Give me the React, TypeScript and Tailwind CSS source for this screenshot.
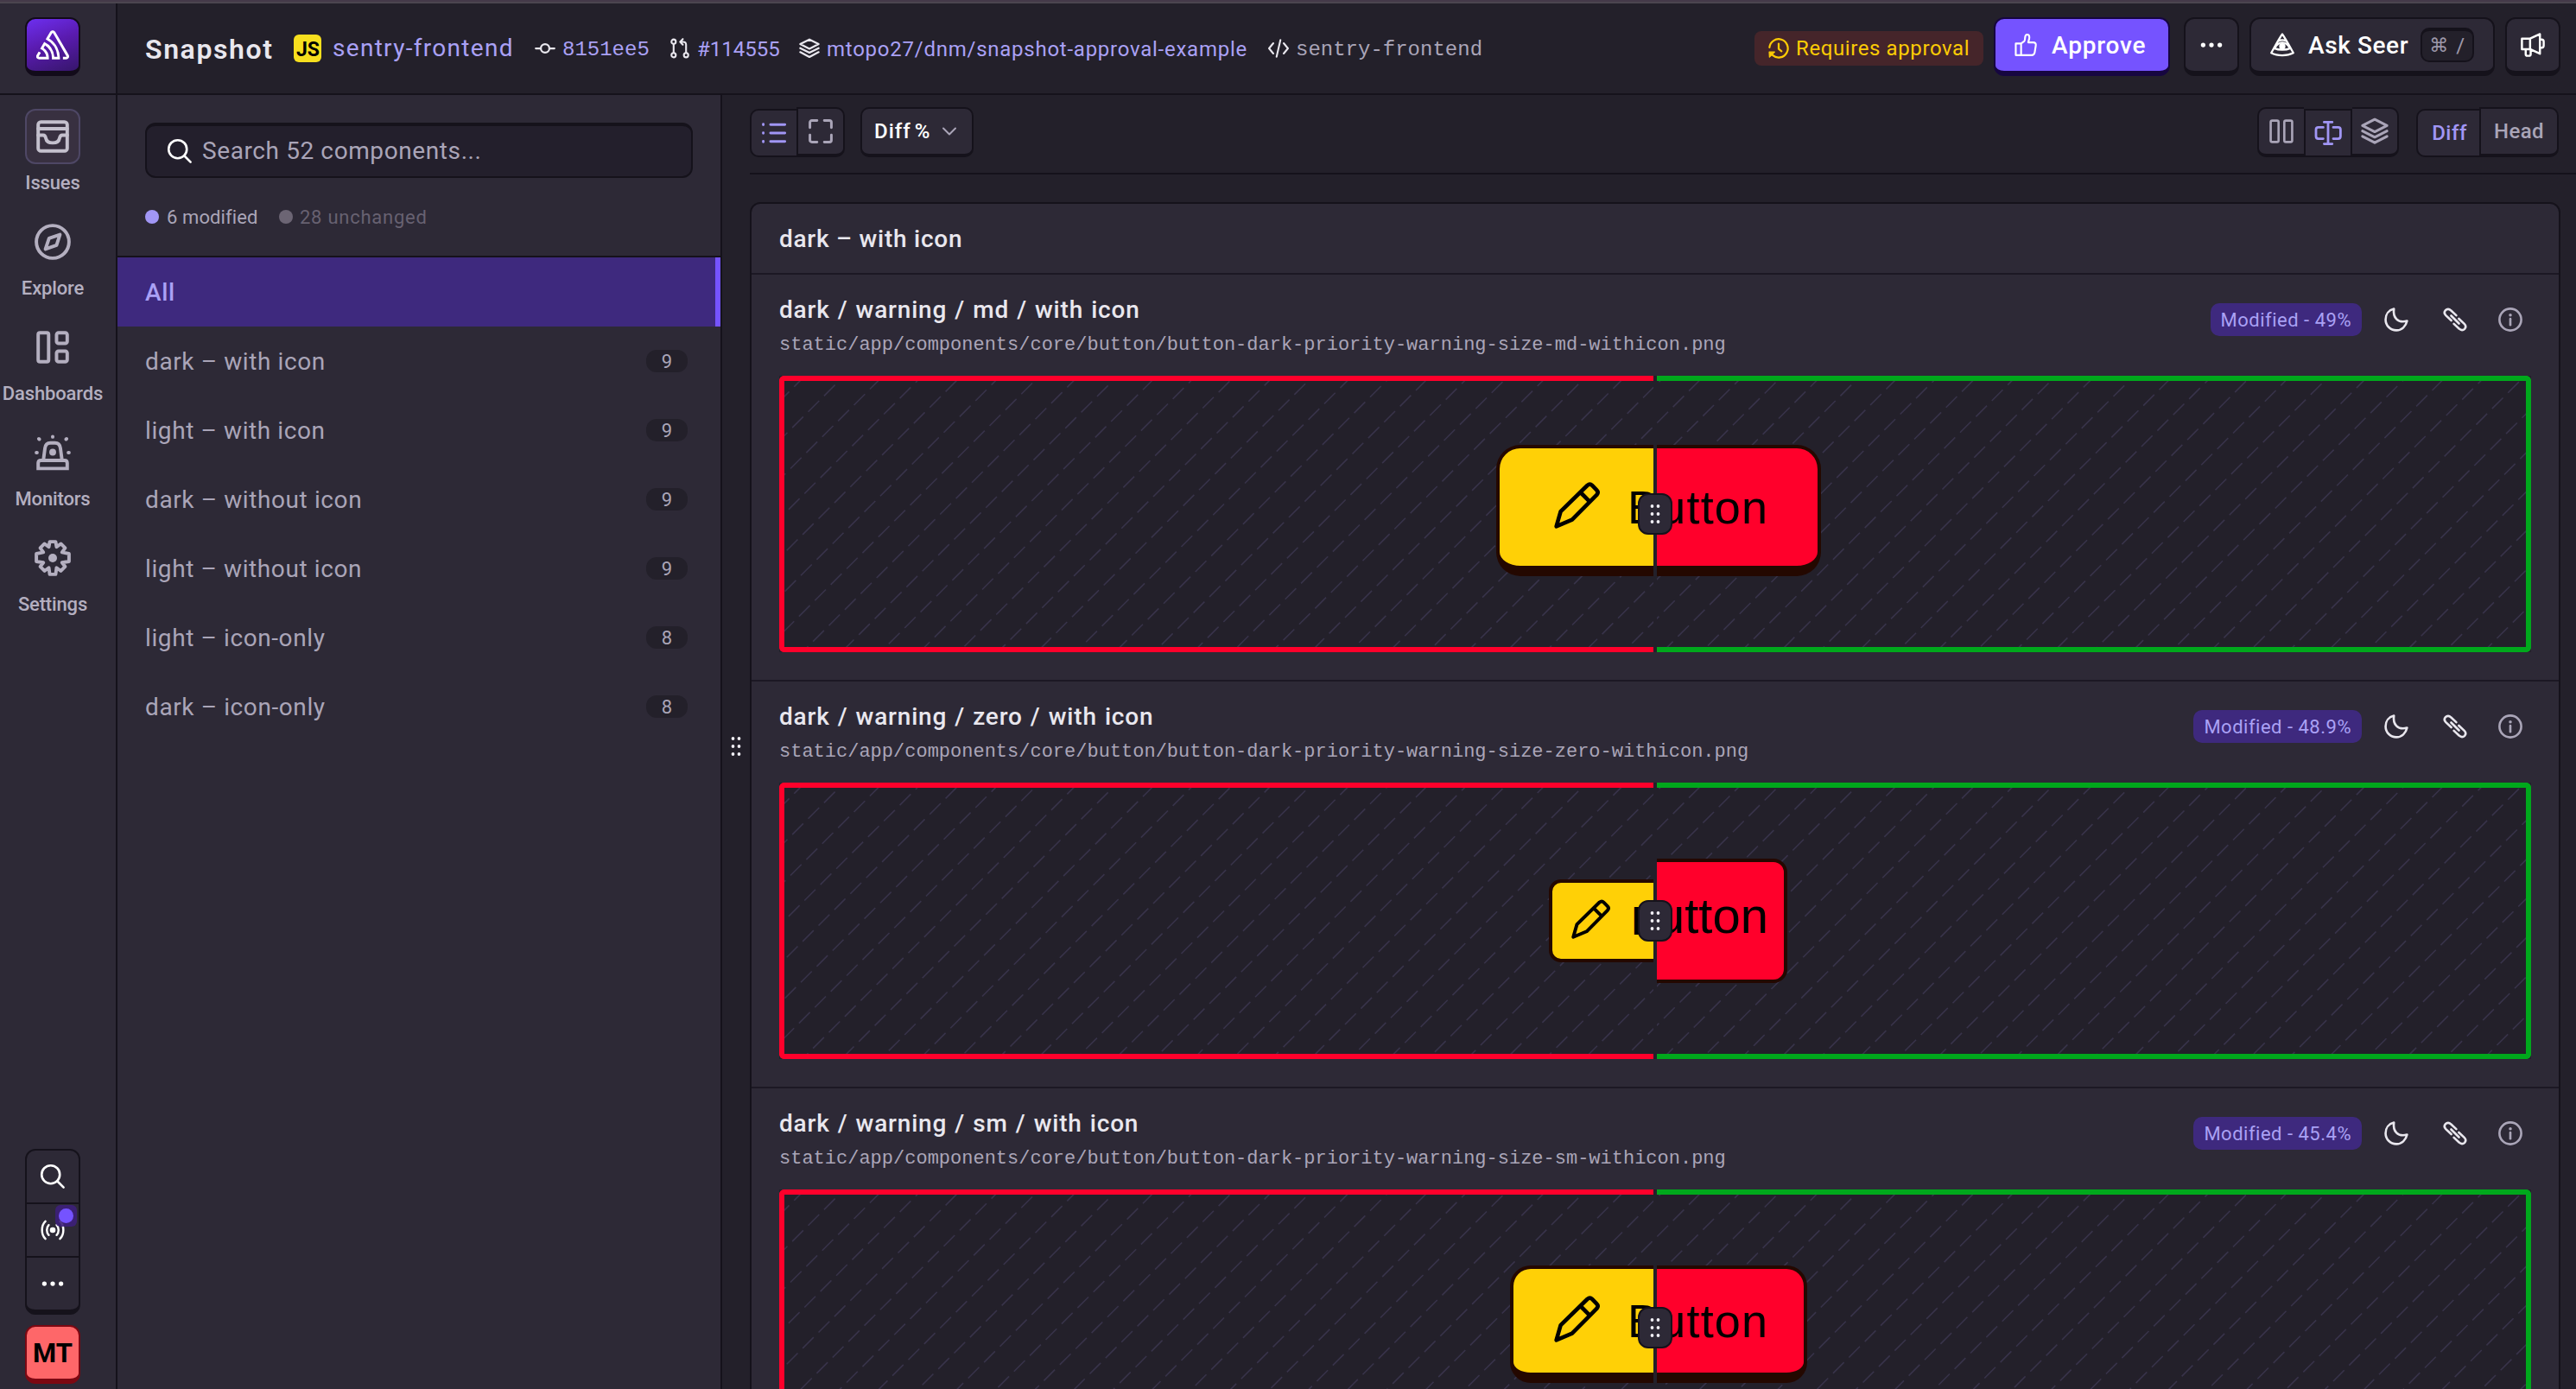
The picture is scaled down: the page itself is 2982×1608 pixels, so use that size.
import type { ReactNode } from 'react';
import { SiSentry } from 'react-icons/si';

type IconProps = { className?: string; width?: number; children?: ReactNode };

function Icon({ className, width = 1.5, children }: IconProps) {
  return (
    <svg
      className={className}
      viewBox="0 0 16 16"
      fill="none"
      stroke="currentColor"
      strokeWidth={width}
      strokeLinecap="round"
      strokeLinejoin="round"
      overflow="visible"
    >
      {children}
    </svg>
  );
}

const IssuesIcon = () => (
  <Icon className="size-[42px]">
    <rect x="1.6" y="1.6" width="12.8" height="12.8" rx="1.2" />
    <path d="M1.6 4.6h12.8M1.6 7.4h2.2c.8 0 1 .5 1.2 1.4.2 1.2.9 2 3 2s2.8-.8 3-2c.2-.9.4-1.4 1.2-1.4h2.2" />
  </Icon>
);

const ExploreIcon = () => (
  <Icon className="size-[42px]">
    <circle cx="8" cy="8" r="7.2" />
    <path d="M11.2 4.8 9.7 9.5 4.8 11.2 6.4 6.4z" />
  </Icon>
);

const DashboardsIcon = () => (
  <Icon className="size-[42px]">
    <rect x="1.6" y="1.6" width="4.6" height="12.8" rx=".8" />
    <rect x="9.7" y="1.6" width="4.7" height="4.7" rx=".9" />
    <rect x="9.7" y="9.7" width="4.7" height="4.7" rx=".9" />
  </Icon>
);

const MonitorsIcon = () => (
  <Icon className="size-[42px]">
    <path d="M1.6 15v-2.4c0-.8.5-1.2 1.2-1.2h10.4c.7 0 1.2.4 1.2 1.2V15z" strokeLinejoin="miter" />
    <path d="m3.9 11.2.7-5.2c.2-1.6 1.1-2.3 2.4-2.3h2c1.3 0 2.2.7 2.4 2.3l.7 5.2M8 .9v.2M1.9 1.9l.2.2M14.1 1.9l-.2.2M.8 8h.3M15.2 8h-.3" />
    <circle cx="8" cy="7.8" r="1.5" fill="currentColor" stroke="none" />
  </Icon>
);

const SettingsIcon = () => (
  <Icon className="size-[42px]">
    <path d="M6.7.8h2.6l.4 2.3 1.9-1.4 1.9 1.9-1.4 1.9 3.1.6v3.4l-3.1.5 1.4 1.8-1.9 1.9-1.9-1.4-.4 2.9H6.7l-.4-2.9-1.9 1.4-1.9-1.9 1.4-1.8-3.1-.5V6.1l3.1-.6-1.4-1.9 1.9-1.9 1.9 1.4z" />
    <circle cx="8" cy="8" r="1.9" fill="currentColor" stroke="none" />
  </Icon>
);

const SearchIcon = () => (
  <Icon className="size-7">
    <circle cx="6.7" cy="6.7" r="6" />
    <path d="m11 11 4.2 4.2" />
  </Icon>
);

const BroadcastIcon = () => (
  <Icon className="size-7" width={1.4}>
    <circle cx="8" cy="8" r="1.9" fill="currentColor" stroke="none" />
    <path d="M5.4 4.7c-1.7 1.7-1.7 4.9 0 6.6M10.6 4.7c1.7 1.7 1.7 4.9 0 6.6M3.2 2.2C.2 5 .2 11 3.2 13.8M12.8 2.2c3 2.8 3 8.8 0 11.6" />
  </Icon>
);

const EllipsisIcon = () => (
  <Icon className="size-7">
    <g fill="currentColor" stroke="none">
      <circle cx="2.5" cy="8" r="1.5" />
      <circle cx="8" cy="8" r="1.5" />
      <circle cx="13.5" cy="8" r="1.5" />
    </g>
  </Icon>
);

const CommitIcon = () => (
  <Icon className="size-6">
    <circle cx="8" cy="8" r="3.3" />
    <path d="M.8 8h3.7M11.5 8h3.7" />
  </Icon>
);

const PullRequestIcon = () => (
  <Icon className="size-6" width={1.4}>
    <circle cx="3.2" cy="2.8" r="1.7" />
    <circle cx="3.2" cy="13.2" r="1.7" />
    <circle cx="12.8" cy="13.2" r="1.7" />
    <path d="M3.2 4.7v6.6M12.8 11.3V5.2c0-1.4-.8-2.2-2.2-2.2H8.4M10.3.8 8.2 3l2.1 2.1" />
  </Icon>
);

const LayersIcon = ({ className = 'size-6' }: { className?: string }) => (
  <Icon className={className}>
    <path d="M8 1.1 15.1 4.7 8 8.3.9 4.7zM.9 7.8 8 11.4l7.1-3.6M.9 10.9 8 14.6l7.1-3.7" />
  </Icon>
);

const CodeIcon = () => (
  <Icon className="size-6" width={1.4}>
    <path d="M4 4 .7 8 4 12M12 4l3.3 4L12 12M9.5 1.5l-3 13" />
  </Icon>
);

const PendingIcon = () => (
  <Icon className="size-6">
    <path d="M.9 7.3a7.1 7.1 0 1 1 2.4 6M8 4.4v4l2.2 1.8" />
    <path d="M.7 10.8h4.2L.9 14.8z" fill="currentColor" strokeWidth={0.8} />
  </Icon>
);

const ThumbIcon = () => (
  <Icon className="size-[26px]" width={1.3}>
    <path d="M.9 7h3.8v8.3H.9zM4.7 7 7 5.3c.4-.4.4-1 .5-2.3C7.6 1.4 8 .6 9 .6c1.2 0 1.6 1 1.6 2 0 1.5-.8 3-.8 3.6h3.6c1.3 0 2 .9 1.8 2.1l-.8 5c-.2 1.3-.9 2-2.2 2H4.7" />
  </Icon>
);

const SeerIcon = () => (
  <Icon className="size-7" width={1.3}>
    <path d="M8 .9C6.9 2 2.2 10.6.7 13.3c4 2.1 10.6 2.1 14.6 0C13.8 10.6 9.1 2 8 .9zM5.4 5.5c1.6-.9 3.6-.9 5.200 0M3 10.2C4.2 7.8 6 6.5 8 6.5s3.8 1.300 5 3.700M2.700 10.200c3 1.400 7.600 1.400 10.600 0" />
    <circle cx="8" cy="9" r="2.1" fill="currentColor" stroke="none" />
  </Icon>
);

const MegaphoneIcon = () => (
  <Icon className="size-7" width={1.4}>
    <path d="M.8 3.8h5.4l6.5-3v13l-6.5-3H.8zM6.2 3.8v7M3.3 10.8v3.3c0 .7.4 1.1 1.1 1.1h1.1c.7 0 1.1-.4 1.1-1.1v-3.2M12.7 4.4h1.1c.9 0 1.4.6 1.4 1.4v2.6c0 .9-.5 1.4-1.4 1.4h-1.1" />
  </Icon>
);

const ListIcon = () => (
  <Icon className="size-7" width={1.7}>
    <path d="M5.7 2.4h9.5M5.7 8h9.5M5.7 13.6h9.5M.9 2.2v.4M.9 7.8v.4M.9 13.4v.4" />
  </Icon>
);

const ExpandIcon = () => (
  <Icon className="size-7" width={1.7}>
    <path d="M.9 5.6V2.2C.9 1.4 1.4.9 2.2.9h3.4M10.4.9h3.4c.8 0 1.3.5 1.3 1.3v3.4M15.1 10.4v3.4c0 .8-.5 1.3-1.3 1.3h-3.4M5.6 15.1H2.2c-.8 0-1.3-.5-1.3-1.3v-3.4" />
  </Icon>
);

const ChevronIcon = () => (
  <Icon className="size-4 text-[#aaa5b8]" width={2}>
    <path d="m1 4.5 7 7 7-7" />
  </Icon>
);

const ColumnsIcon = () => (
  <Icon className="size-7">
    <rect x=".9" y=".9" width="5.2" height="14.2" rx="1" />
    <rect x="9.9" y=".9" width="5.2" height="14.2" rx="1" />
  </Icon>
);

const SliderIcon = () => (
  <Icon className="size-8" width={1.4}>
    <path d="M5.7 1.7h4.7M5.7 14.3h4.7M8 1.7v12.6M5.2 4.7H2.4c-.9 0-1.4.5-1.4 1.4v3.8c0 .9.5 1.4 1.4 1.4h2.8M11 4.7h2.8c.9 0 1.4.5 1.4 1.4v3.8c0 .9-.5 1.4-1.4 1.4H11" />
  </Icon>
);

const MoonIcon = () => (
  <Icon className="size-7">
    <path d="M6.4.9c-.8 5.5 2.4 9.7 8.7 8-.8 3.6-3.5 6.2-7.1 6.2A7.1 7.1 0 0 1 .9 8C.9 4.5 3 1.7 6.4.9z" />
  </Icon>
);

const LinkIcon = () => (
  <Icon className="size-7">
    <path d="M5.5 8.6 1.9 5.2C.8 4.1.8 2.8 1.7 1.8c1-1 2.4-1 3.5.1l3.6 3.3M5.4 5.4l5.2 5.2M10.5 7.4l3.6 3.4c1.1 1.1 1.1 2.4.2 3.4-1 1-2.4 1-3.5-.1l-3.6-3.3" />
  </Icon>
);

const InfoIcon = () => (
  <Icon className="size-7 text-[#aaa5b8]">
    <circle cx="8" cy="8" r="7.2" />
    <path d="M8 7.5v4" />
    <circle cx="8" cy="5" r="1" fill="currentColor" stroke="none" />
  </Icon>
);

const PencilIcon = ({ className }: { className: string }) => (
  <Icon className={className} width={1.4}>
    <path d="M.8 15.2 2.3 10 11.6.9c.6-.5 1.2-.5 1.7 0l1.6 1.6c.5.5.5 1.1 0 1.7L6.3 12.9zM9.3 3.4l3.2 3.2" />
  </Icon>
);

// six dot drag grip
const Grip = () => (
  <svg className="h-6 w-3" viewBox="0 0 12 24" fill="#f0eef5">
    {[3, 12, 21].map(y => (
      <g key={y}>
        <circle cx="2.5" cy={y} r="1.9" />
        <circle cx="9.5" cy={y} r="1.9" />
      </g>
    ))}
  </svg>
);

const nav = [
  { label: 'Issues', icon: <IssuesIcon />, active: true },
  { label: 'Explore', icon: <ExploreIcon /> },
  { label: 'Dashboards', icon: <DashboardsIcon /> },
  { label: 'Monitors', icon: <MonitorsIcon /> },
  { label: 'Settings', icon: <SettingsIcon /> },
];

const groups = [
  { name: 'dark – with icon', count: 9 },
  { name: 'light – with icon', count: 9 },
  { name: 'dark – without icon', count: 9 },
  { name: 'light – without icon', count: 9 },
  { name: 'light – icon-only', count: 8 },
  { name: 'dark – icon-only', count: 8 },
];

function Sidebar() {
  return (
    <nav className="flex w-[136px] shrink-0 flex-col border-r-2 border-[#15121b] bg-[#2d2936]">
      <div className="h-[106px] shrink-0 border-b-2 border-[#15121b] pt-4 pl-[29px]">
        <div className="flex h-[68px] w-16 items-center justify-center rounded-xl border-2 border-b-[6px] border-[#120b1a] bg-[linear-gradient(160deg,#6d2ff0_0%,#5a1bb0_45%,#36166b_100%)] text-white">
          <SiSentry size={38} />
        </div>
      </div>
      <div className="flex flex-col gap-[26px] pt-4">
        {nav.map(item => (
          <div key={item.label} className="flex h-24 w-[122px] flex-col items-center text-[#b4afc0]">
            <div
              className={
                item.active
                  ? 'flex size-16 shrink-0 items-center justify-center rounded-xl border-2 border-[#4e4765] bg-[#383040] text-[#c4c0cd]'
                  : 'flex size-16 shrink-0 items-center justify-center'
              }
            >
              {item.icon}
            </div>
            <span className="mt-[9px] text-[22px] leading-[26px] font-medium tracking-[-0.15px]">{item.label}</span>
          </div>
        ))}
      </div>
      <div className="mt-auto mb-1.5 ml-[29px] w-16 text-white">
        <div className="h-48 rounded-xl border-2 border-b-[6px] border-[#15121b]">
          <div className="flex h-[62px] items-center justify-center border-b-2 border-[#15121b]">
            <SearchIcon />
          </div>
          <div className="relative flex h-[62px] items-center justify-center border-b-2 border-[#15121b]">
            <BroadcastIcon />
            <div className="absolute top-px right-0.5 flex size-[25px] items-center justify-center rounded-md bg-[#3d1f7a]/90">
              <div className="size-[17px] rounded-full bg-[#7553ff]" />
            </div>
          </div>
          <div className="flex h-[60px] items-center justify-center">
            <EllipsisIcon />
          </div>
        </div>
        <div className="mt-3 flex h-[68px] items-center justify-center rounded-xl border-2 border-b-[6px] border-[#7c0812] bg-[#fe6769] pt-0.5 text-[31px] font-bold text-black">
          MT
        </div>
      </div>
    </nav>
  );
}

function Header() {
  return (
    <header className="flex h-[106px] shrink-0 items-start border-b-2 border-[#15121b] pr-[18px] pl-8 text-[#aaa1f5]">
      <div className="flex h-[104px] items-center text-2xl">
        <h1 className="w-[172px] pt-0.5 text-[32px] font-semibold tracking-[1.6px] text-[#e9e7ee]">Snapshot</h1>
        <div className="mr-[13px] flex size-8 items-end justify-end rounded-md bg-[#f7df1e] pr-0.5 text-[23px] leading-[29px] font-bold text-black">
          JS
        </div>
        <span className="w-[234px] text-[28px] tracking-[1.3px]">sentry-frontend</span>
        <span className="mr-2 text-[#e9e7ee]"><CommitIcon /></span>
        <span className="w-[124px] pt-[3px] font-['Liberation_Mono',monospace]">8151ee5</span>
        <span className="mr-2 text-[#e9e7ee]"><PullRequestIcon /></span>
        <span className="w-[118px] pt-0.5">#114555</span>
        <span className="mr-2 text-[#e9e7ee]"><LayersIcon /></span>
        <span className="w-[511px] pt-0.5 tracking-[0.75px]">mtopo27/dnm/snapshot-approval-example</span>
        <span className="mr-2 text-[#e9e7ee]"><CodeIcon /></span>
        <span className="pt-[3px] font-['Liberation_Mono',monospace] text-[#aaa5b8]">sentry-frontend</span>
      </div>
      <div className="mt-4 ml-auto flex text-white">
        <div className="mt-4 mr-3 flex h-10 w-[265px] items-center gap-2 rounded-lg bg-[#45252a] pl-4 text-2xl tracking-[0.6px] text-[#fccb05]">
          <PendingIcon />
          Requires approval
        </div>
        <div className="mr-4 flex h-[68px] w-[204px] items-center gap-[17px] rounded-xl border-2 border-b-[6px] border-[#160640] bg-[#7553ff] pl-[22px] text-[28px] font-medium tracking-[0.8px]">
          <ThumbIcon />
          <span className="pt-px">Approve</span>
        </div>
        <div className="mr-3 flex h-[68px] w-16 items-center justify-center rounded-xl border-2 border-b-[6px] border-[#15121b] bg-[#2d2936]">
          <EllipsisIcon />
        </div>
        <div className="mr-3 flex h-[68px] w-[284px] items-center rounded-xl border-2 border-b-[6px] border-[#15121b] bg-[#2d2936] pl-[22px] text-[28px] font-medium tracking-[0.6px]">
          <SeerIcon />
          <span className="ml-4 w-[130px] pt-px">Ask Seer</span>
          <kbd className="flex h-10 w-[62px] items-center justify-center gap-[9px] rounded-[10px] border-2 border-t-4 border-[#15121b] bg-[#23202a] text-2xl font-normal text-[#9d98aa]">
            <span className="font-['DejaVu_Sans',sans-serif] text-[22px] tracking-normal">⌘</span>
            <span className="font-['Roboto',sans-serif]">/</span>
          </kbd>
        </div>
        <div className="flex h-[68px] w-16 items-center justify-center rounded-xl border-2 border-b-[6px] border-[#15121b] bg-[#2d2936]">
          <MegaphoneIcon />
        </div>
      </div>
    </header>
  );
}

function SnapshotList() {
  return (
    <aside className="flex w-[700px] shrink-0 flex-col border-r-2 border-[#15121b] bg-[#2d2936] text-[#aaa5b8]">
      <div className="h-[188px] border-b-2 border-[#15121b] px-8 pt-8">
        <div className="flex h-16 items-center gap-3 rounded-xl border-2 border-t-4 border-[#15121b] bg-[#231f2c] pl-6 text-[28px] tracking-[0.6px]">
          <span className="text-white"><SearchIcon /></span>
          Search 52 components...
        </div>
        <div className="mt-8 flex h-[26px] items-center text-[22px]">
          <span className="mr-[9px] size-4 rounded-full bg-[#a196f5]" />
          <span className="w-[130px] tracking-[0.1px]">6 modified</span>
          <span className="mr-2 size-4 rounded-full bg-[#6c6574]" />
          <span className="tracking-[0.75px] text-[#676171]">28 unchanged</span>
        </div>
      </div>
      <div className="flex h-20 items-center border-r-[6px] border-[#7553ff] bg-[#3e297e] pt-0.5 pl-8 text-[28px] font-medium tracking-[0.6px] text-[#aaa1f5]">
        All
      </div>
      {groups.map(group => (
        <div key={group.name} className="flex h-20 items-center justify-between pr-[38px] pl-8">
          <span className="pt-0.5 text-[28px] tracking-[0.6px]">{group.name}</span>
          <span className="flex h-[26px] w-12 items-center justify-center rounded-xl bg-[#23202a] text-[22px]">
            {group.count}
          </span>
        </div>
      ))}
    </aside>
  );
}

function Toolbar() {
  return (
    <div className="flex h-[92px] shrink-0 border-b-2 border-[#15121b] pt-3.5 pr-5 text-2xl font-medium text-[#aaa5b8]">
      <div className="mr-[18px] flex h-[58px]">
        <div className="mt-0.5 flex w-[54px] items-center justify-center rounded-l-[10px] border-2 border-r-0 border-[#15121b] bg-[#2d2936] text-[#a196f5]">
          <ListIcon />
        </div>
        <div className="flex w-14 items-center justify-center rounded-r-[10px] border-2 border-b-4 border-[#15121b] bg-[#2d2936]">
          <ExpandIcon />
        </div>
      </div>
      <div className="flex h-[58px] w-[131px] items-center justify-between rounded-[10px] border-2 border-b-4 border-[#15121b] bg-[#2d2936] pr-[18px] pl-3.5 tracking-[1px] [word-spacing:-3px] text-white">
        Diff %
        <ChevronIcon />
      </div>
      <div className="ml-auto flex h-[58px]">
        <div className="flex w-[54px] items-center justify-center rounded-l-[10px] border-2 border-r-0 border-b-4 border-[#15121b] bg-[#2d2936]">
          <ColumnsIcon />
        </div>
        <div className="mt-0.5 flex w-14 items-center justify-center border-2 border-[#15121b] bg-[#2d2936] text-[#a196f5]">
          <SliderIcon />
        </div>
        <div className="flex w-[54px] items-center justify-center rounded-r-[10px] border-2 border-b-4 border-l-0 border-[#15121b] bg-[#2d2936]">
          <LayersIcon className="size-8" />
        </div>
      </div>
      <div className="ml-5 flex h-[58px]">
        <div className="mt-0.5 flex w-[73px] items-center justify-center rounded-l-[10px] border-2 border-r-0 border-[#15121b] bg-[#2d2936] pl-0.5 tracking-[0.5px] text-[#a196f5]">
          Diff
        </div>
        <div className="flex w-[92px] items-center justify-center rounded-r-[10px] border-2 border-b-4 border-[#15121b] bg-[#2d2936] tracking-[0.4px]">
          Head
        </div>
      </div>
    </div>
  );
}

function Hatch() {
  const lines = Array.from({ length: 53 }, (_, i) => 30 + i * 45.25);
  return (
    <svg className="absolute inset-0 size-full" stroke="#38334a" strokeWidth="1.6">
      {lines.map((c, i) => (
        <line key={c} x1={c} y1="0" x2={c - 320} y2="320" strokeDasharray="18 8" strokeDashoffset={(i * 11) % 26} />
      ))}
    </svg>
  );
}

const items = [
  {
    title: 'dark / warning / md / with icon',
    path: 'static/app/components/core/button/button-dark-priority-warning-size-md-withicon.png',
    diff: '49%',
    // left and right halves of the split preview
    before: (
      <div className="absolute top-[74px] left-[824px] h-[152px] w-[376px] rounded-[28px] border-4 border-b-[12px] border-[#240800] bg-[#ffd006] text-[54px] tracking-[1.2px] text-black">
        <PencilIcon className="absolute top-[40px] left-[63px] size-[53px]" />
        <span className="absolute top-[38px] left-[148px] leading-[60px]">Button</span>
      </div>
    ),
    after: (
      <div className="absolute top-[74px] right-[816px] h-[152px] w-[376px] rounded-[28px] border-4 border-b-[12px] border-[#240800] bg-[#ff002b] text-[54px] tracking-[1.2px] text-black">
        <span className="absolute top-[38px] left-[148px] leading-[60px]">Button</span>
      </div>
    ),
  },
  {
    title: 'dark / warning / zero / with icon',
    path: 'static/app/components/core/button/button-dark-priority-warning-size-zero-withicon.png',
    diff: '48.9%',
    before: (
      <div className="absolute top-[106px] left-[885px] h-[96px] w-[250px] rounded-[14px] border-4 border-[#240800] bg-[#ffd006] text-[46px] text-black">
        <PencilIcon className="absolute top-[20px] left-[22px] size-[45px]" />
        <span className="absolute top-[14px] left-[91px] leading-[60px]">Button</span>
      </div>
    ),
    after: (
      <div className="absolute top-[82px] right-[855px] h-[144px] w-[300px] rounded-[16px] border-4 border-[#240800] bg-[#ff002b] text-[58px] text-black">
        <span className="absolute top-[32px] right-[18px] leading-[60px]">Button</span>
      </div>
    ),
  },
  {
    title: 'dark / warning / sm / with icon',
    path: 'static/app/components/core/button/button-dark-priority-warning-size-sm-withicon.png',
    diff: '45.4%',
    before: (
      <div className="absolute top-[82px] left-[840px] h-[136px] w-[344px] rounded-[24px] border-4 border-b-[12px] border-[#240800] bg-[#ffd006] text-[54px] tracking-[1.2px] text-black">
        <PencilIcon className="absolute top-[32px] left-[47px] size-[53px]" />
        <span className="absolute top-[30px] left-[132px] leading-[60px]">Button</span>
      </div>
    ),
    after: (
      <div className="absolute top-[82px] right-[832px] h-[136px] w-[344px] rounded-[24px] border-4 border-b-[12px] border-[#240800] bg-[#ff002b] text-[54px] tracking-[1.2px] text-black">
        <span className="absolute top-[30px] left-[132px] leading-[60px]">Button</span>
      </div>
    ),
  },
];

function SnapshotCard({ item }: { item: (typeof items)[number] }) {
  return (
    <section className="h-[471px] border-b-2 border-[#1c1824] px-8">
      <div className="flex h-[117px] justify-between">
        <div className="pt-6">
          <h3 className="text-[28px] leading-[34px] font-medium tracking-[0.8px] [word-spacing:1.4px] text-[#e9e7ee]">{item.title}</h3>
          <p className="mt-3 font-['Liberation_Mono',monospace] text-[22px] leading-6 text-[#aaa5b8]">{item.path}</p>
        </div>
        <div className="mt-[33px] mr-2.5 flex h-[38px] items-center text-[#e9e7ee]">
          <span className="mr-[26px] flex h-[38px] items-center rounded-[10px] bg-[#3e297e] px-3 text-[22px] tracking-[0.5px] text-[#aaa1f5]">
            Modified - {item.diff}
          </span>
          <MoonIcon />
          <span className="mr-9 ml-10"><LinkIcon /></span>
          <InfoIcon />
        </div>
      </div>
      <div className="relative h-80 bg-[#23202a] font-['Liberation_Sans',sans-serif]">
        <Hatch />
        <div className="relative grid h-80 grid-cols-2 gap-1">
          <div className="relative overflow-hidden rounded-l-md border-6 border-r-0 border-[#ff002b]">{item.before}</div>
          <div className="relative overflow-hidden rounded-r-md border-6 border-l-0 border-[#00a81c]">{item.after}</div>
        </div>
        <div className="absolute top-0 left-1/2 -ml-0.5 h-80 w-1 bg-[#23202a]" />
        <div className="absolute top-[136px] left-1/2 -ml-5 flex h-12 w-10 items-center justify-center rounded-xl border-2 border-[#15121b] bg-[#2d2936]">
          <Grip />
        </div>
      </div>
    </section>
  );
}

export default function App() {
  return (
    <div className="flex h-[1608px] w-[2982px] flex-col overflow-hidden bg-[#23202a] font-['Roboto',sans-serif]">
      <div className="h-1 shrink-0 border-t-2 border-[#443949] bg-[#4b454f]" />
      <div className="flex h-[1604px]">
        <Sidebar />
        <div className="flex min-w-0 flex-1 flex-col">
          <Header />
          <div className="flex min-h-0 flex-1">
            <SnapshotList />
            <div className="flex w-8 shrink-0 items-center justify-center pt-[9px]">
              <Grip />
            </div>
            <main className="flex min-w-0 flex-1 flex-col">
              <Toolbar />
              <div className="mt-8 mr-[18px] h-[1500px] shrink-0 rounded-xl border-2 border-[#15121b] bg-[#2d2936]">
                <h2 className="flex h-[82px] items-center border-b-2 border-[#1c1824] px-8 pt-0.5 text-[28px] font-medium tracking-[0.75px] text-[#e9e7ee]">
                  dark – with icon
                </h2>
                {items.map(item => (
                  <SnapshotCard key={item.title} item={item} />
                ))}
              </div>
            </main>
          </div>
        </div>
      </div>
    </div>
  );
}
